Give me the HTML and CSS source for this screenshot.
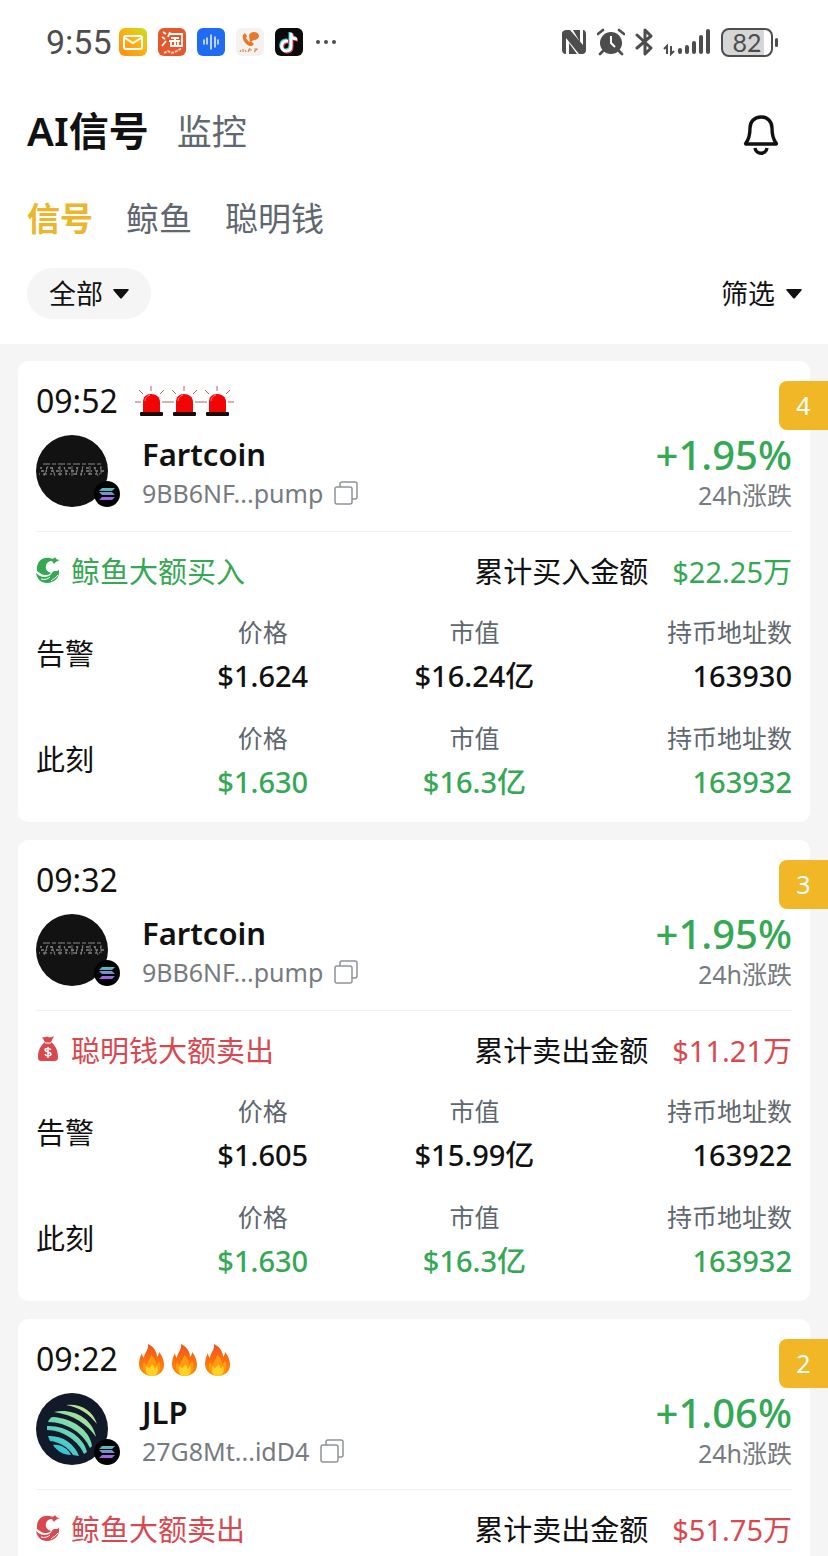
FILE: index.html
```html
<!DOCTYPE html>
<html lang="zh-CN">
<head>
    <meta charset="UTF-8">
    <meta name="viewport" content="width=device-width, initial-scale=1.0">
    <title>AI信号</title>
    <link rel="stylesheet" href="styles.css">
</head>
<body>
    <!-- shared icons -->
    <svg class="sprite" aria-hidden="true">
        <defs>
            <linearGradient id="sol" x1="0" y1="0" x2="0" y2="1">
                <stop offset="0" stop-color="#4fc3b4"/>
                <stop offset="0.5" stop-color="#7b8ad0"/>
                <stop offset="1" stop-color="#a75be0"/>
            </linearGradient>
            <linearGradient id="jup" gradientUnits="userSpaceOnUse" x1="56" y1="12" x2="22" y2="60">
                <stop offset="0" stop-color="#d3e78a"/>
                <stop offset="0.5" stop-color="#7fdcaa"/>
                <stop offset="1" stop-color="#2cc0dc"/>
            </linearGradient>
            <linearGradient id="flame" x1="0" y1="0" x2="0" y2="1">
                <stop offset="0" stop-color="#f4511e"/>
                <stop offset="1" stop-color="#ff8f00"/>
            </linearGradient>
            <linearGradient id="mail" x1="1" y1="0" x2="0" y2="1">
                <stop offset="0" stop-color="#b5e61d"/>
                <stop offset="0.4" stop-color="#fcb712"/>
                <stop offset="1" stop-color="#fb8c14"/>
            </linearGradient>
        </defs>
        <symbol id="siren" viewBox="0 0 33 32">
            <path d="M0 16h6M27 16h6M4 4l4 4M29 4l-4 4M16 0v5" stroke="#b0655f" stroke-width="1" fill="none"/>
            <path d="M8 27V16c0-5 3-8 8-8s9 3 9 8v11z" fill="#f20505"/>
            <path d="M10 15c0-3 2-5 5-6" stroke="#ff7a6b" stroke-width="1" fill="none"/>
            <rect x="5" y="26" width="23" height="4" rx="1" fill="#1c0808"/>
        </symbol>
        <symbol id="fire" viewBox="0 0 33 34">
            <path d="M13 1c6 3 9 8 9 13 1-1 2-3 2-5 4 5 5 9 5 13 0 7-6 11-12 11S4 29 4 21c0-4 1-7 3-11 0 2 1 4 2 5 0-5 5-8 4-14z" fill="url(#flame)"/>
            <path d="M16 12c5 4 5 7 5 10l3-4c3 6 2 14-7 14-8 0-11-7-8-13 1 2 2 3 3 3 0-4 4-6 4-10z" fill="#ff9a12"/>
            <path d="M17 21c2 2 2 3 3 5l2-3c2 5 0 10-5 10s-8-5-5-10c1 1 1 2 2 2 1-1 3-2 3-4z" fill="#ffd322"/>
        </symbol>
        <symbol id="whale" viewBox="0 0 24 26">
            <path d="M14 1C5-1 0 6 1 14c3 2 5 4 8 4 2 0 4 0 6-2-4-1-6-4-5-7 0-3 3-5 6-5l2 3c1-2 3-3 6-4-3 0-4-1-5-3-1 2-3 2-5 1z"/>
            <path d="M0 16c4 4 8 5 13 3 2-1 3-4 5-5 2 0 4 0 5-1 1 8-5 13-12 13C5 26 1 22 0 16z"/>
            <path d="M5 22c4 1 7 0 9-2M15 24c2-2 5-3 7-6" stroke="#fff" stroke-width="1" fill="none"/>
        </symbol>
        <symbol id="bag" viewBox="0 0 24 26">
            <path d="M6 1c3 1 4-1 6 0s4 0 6-1l-3 6c5 4 7 9 7 15 0 3-1 4-4 4H6c-3 0-4-1-4-4C2 15 4 10 9 6z"/>
            <path d="M9 7h6" stroke="#fff" stroke-width="1"/>
            <path d="M15 14c-1-2-6-2-6 0s6 2 6 4-5 3-6 0M12 11v11" stroke="#fff" stroke-width="1.5" fill="none"/>
        </symbol>
        <symbol id="copy" viewBox="0 0 24 24">
            <g fill="none" stroke="#8f9499" stroke-width="1.5">
                <rect x="1" y="6" width="17" height="17" rx="2"/>
                <path d="M6 6V3c0-1 1-2 2-2h13c1 0 2 1 2 2v13c0 1-1 2-2 2h-3"/>
            </g>
        </symbol>
        <symbol id="solana" viewBox="0 0 26 26">
            <circle cx="13" cy="13" r="13" fill="#030304"/>
            <path d="M8 7h13l-3 3H5zM5 11h13l3 3H8zM8 16h13l-3 3H5z" fill="url(#sol)"/>
        </symbol>
        <symbol id="fartcoin" viewBox="0 0 72 72">
            <circle cx="36" cy="36" r="36" fill="#121212"/>
            <g fill="none" stroke="#8a8a8a">
                <path d="M7 29h60" stroke-width="1" stroke-dasharray="7 2 4 2"/>
                <path d="M4 33h64" stroke-width="2" stroke-dasharray="2 4 1 3 3 5" opacity="0.7"/>
                <path d="M5 36h64" stroke-width="2" stroke-dasharray="3 2 1 4 2 3" opacity="0.7"/>
                <path d="M3 39h64" stroke-width="2" stroke-dasharray="1 3 4 3 2 2" opacity="0.6"/>
                <path d="M12 31l-4 10M16 32l3 9M24 31v10M28 32l3 8M36 31v10M42 32l-2 8M47 31l-2 10M54 31v9M58 32l4 9M65 31v8" stroke-width="1" opacity="0.8"/>
            </g>
        </symbol>
        <symbol id="jupiter" viewBox="0 0 72 72">
            <circle cx="36" cy="36" r="36" fill="#121a2a"/>
            <g fill="url(#jup)">
                <path d="M30 12c13-2 27 5 31 19-8-10-18-17-31-19z"/>
                <path d="M18 19c17-4 38 5 42 25-9-13-22-22-42-25z"/>
                <path d="M12 29c1-3 3-5 5-5 19 1 37 13 39 29l-2 2c-6-14-23-26-42-26z"/>
                <path d="M11 37v-4c18-1 37 11 40 26l-3 2c-5-12-20-24-37-24z"/>
                <path d="M14 48l-2-5c14-1 27 8 31 20l-6-1c-4-7-13-13-23-14z"/>
                <path d="M17 52c8-1 15 4 18 10-8 0-14-4-18-10z"/>
            </g>
        </symbol>
        <symbol id="arrow" viewBox="0 0 16 10">
            <path d="M1 0h14c1 0 1 1 0 2L9 9c-1 1-1 1-2 0L1 2C0 1 0 0 1 0z" fill="#111"/>
        </symbol>
    </svg>

    <div class="app">
        <div class="status-bar">
            <div class="status-left">
                <span class="clock">9:55</span>
                <svg class="app-icon" viewBox="0 0 28 28">
                    <rect width="28" height="28" rx="6" fill="url(#mail)"/>
                    <rect x="5" y="8" width="18" height="13" rx="2" fill="none" stroke="#fff" stroke-width="2"/>
                    <path d="M6 10l8 5 8-5" fill="none" stroke="#fff" stroke-width="2"/>
                </svg>
                <svg class="app-icon" viewBox="0 0 28 28">
                    <rect width="28" height="28" rx="6" fill="#e5582c"/>
                    <path d="M5 4l3 2M4 9l3 2M4 18l4-5M12 4l-2 5M11 6h13v12h-3M13 10h8M11 13h11M17 10v7M13 14v4h7v-4" fill="none" stroke="#fff" stroke-width="1.8"/>
                    <path d="M6 25l4-2 4 2 5-2 5-3" fill="none" stroke="#f8c9bd" stroke-width="2" stroke-dasharray="3 1"/>
                </svg>
                <svg class="app-icon" viewBox="0 0 28 28">
                    <rect width="28" height="28" rx="6" fill="#1f6bf2"/>
                    <path d="M7 12v4M10 10v6M14 7v14M18 9v10M21 12v4" stroke="#fff" stroke-width="1.4" stroke-linecap="round"/>
                </svg>
                <svg class="app-icon" viewBox="0 0 28 28">
                    <rect width="28" height="28" rx="6" fill="#f4f2f0"/>
                    <path d="M8 6c-4 3 2 13 8 12l2-2-3-3-2 1-3-4 1-2-2-3z" fill="#e8762c"/>
                    <path d="M13 8a5 4 0 1 1 5 4l-4 2z" fill="#e8762c"/>
                    <path d="M7 21v3M5 22l-1 2M9 22l1 2M12 22h4M14 20l-2 4M18 21h4M18 24l3-3" fill="none" stroke="#d98b52" stroke-width="1.2"/>
                </svg>
                <svg class="app-icon" viewBox="0 0 28 28">
                    <rect width="28" height="28" rx="6" fill="#0b0b0c"/>
                    <g fill="none" stroke-width="3">
                        <path d="M12 12c-8-1-8 10-2 10 4 0 5-2 5-5V4c0 4 3 6 6 6" stroke="#35d6d2"/>
                        <path d="M14 14c-8-1-8 10-2 10 4 0 5-2 5-5V6c1 4 3 6 6 6" stroke="#ee3457"/>
                        <path d="M13 13c-8-1-8 10-2 10 4 0 5-2 5-5V5c0 4 2 6 6 6" stroke="#fff"/>
                    </g>
                </svg>
                <svg class="more" viewBox="0 0 20 4"><g fill="#4d4d4d"><circle cx="2" cy="2" r="2"/><circle cx="10" cy="2" r="2"/><circle cx="18" cy="2" r="2"/></g></svg>
            </div>
            <div class="status-right">
                <svg class="nfc" viewBox="0 0 26 26">
                    <path d="M6 1h3l13 15V1c2 0 3 2 3 4v16c0 2-1 4-4 4h-3L5 9v16c-3 0-4-2-4-4V5c0-3 2-4 5-4z" fill="#4d4d4d"/>
                    <path d="M8 14l8 11H8zM12 1h7v12z" fill="#4d4d4d"/>
                </svg>
                <svg class="alarm" viewBox="0 0 28 28">
                    <circle cx="14" cy="15" r="11" fill="#4d4d4d"/>
                    <path d="M1 6l5-4M27 6l-5-4M6 23l-3 3M22 23l3 3" stroke="#4d4d4d" stroke-width="2.6" stroke-linecap="round"/>
                    <path d="M14 8v7l4 4" fill="none" stroke="#fff" stroke-width="2"/>
                </svg>
                <svg class="bluetooth" viewBox="0 0 18 28">
                    <path d="M2 7l14 13-6 6V2l6 6L2 20" fill="none" stroke="#4d4d4d" stroke-width="3" stroke-linejoin="round" stroke-linecap="round"/>
                </svg>
                <svg class="signal" viewBox="0 0 48 28">
                    <path d="M4 26v-8l-3 3M8 18v8l3-3" fill="none" stroke="#4d4d4d" stroke-width="2"/>
                    <path d="M17 24v-2M24 24v-5M31 24v-9M38 24V9M45 24V3" stroke="#4d4d4d" stroke-width="4" stroke-linecap="round"/>
                </svg>
                <div class="battery">82</div>
            </div>
        </div>

        <header class="header">
            <h1>AI信号</h1>
            <a class="monitor" href="#">监控</a>
            <button class="bell" aria-label="通知">
                <svg viewBox="0 0 36 42">
                    <path d="M18 2c7 0 11 5 11 11 0 7 1 11 4 15 1 1 0 1-1 1H4c-1 0-2 0-1-1 3-4 4-8 4-15C7 7 11 2 18 2z" fill="none" stroke="#111" stroke-width="3.4" stroke-linejoin="round"/>
                    <path d="M12 33c1 7 11 7 12 0" fill="none" stroke="#111" stroke-width="3.4"/>
                </svg>
            </button>
        </header>

        <nav class="tabs">
            <a class="active" href="#">信号</a>
            <a href="#">鲸鱼</a>
            <a href="#">聪明钱</a>
        </nav>

        <div class="filters">
            <div class="dropdown chip">
                <select aria-label="类型"><option>全部</option></select>
                <svg><use href="#arrow"/></svg>
            </div>
            <div class="dropdown">
                <select aria-label="筛选"><option>筛选</option></select>
                <svg><use href="#arrow"/></svg>
            </div>
        </div>

        <main class="list">
            <article class="card">
                <span class="count">4</span>
                <div class="time">
                    <time>09:52</time>
                    <span class="level">
                        <svg><use href="#siren"/></svg><svg><use href="#siren"/></svg><svg><use href="#siren"/></svg>
                    </span>
                </div>
                <div class="token">
                    <div class="avatar">
                        <svg class="logo"><use href="#fartcoin"/></svg>
                        <svg class="chain"><use href="#solana"/></svg>
                    </div>
                    <div class="info">
                        <h2>Fartcoin</h2>
                        <p>9BB6NF...pump <button class="copy" aria-label="复制"><svg><use href="#copy"/></svg></button></p>
                    </div>
                    <div class="change">
                        <strong>+1.95%</strong>
                        <p>24h涨跌</p>
                    </div>
                </div>
                <div class="signal-row buy">
                    <svg><use href="#whale"/></svg>
                    <span class="type">鲸鱼大额买入</span>
                    <span class="label">累计买入金额</span>
                    <span class="amount">$22.25万</span>
                </div>
                <table>
                    <tr>
                        <th scope="row">告警</th>
                        <td><span>价格</span><b>$1.624</b></td>
                        <td><span>市值</span><b>$16.24亿</b></td>
                        <td><span>持币地址数</span><b>163930</b></td>
                    </tr>
                    <tr class="now">
                        <th scope="row">此刻</th>
                        <td><span>价格</span><b>$1.630</b></td>
                        <td><span>市值</span><b>$16.3亿</b></td>
                        <td><span>持币地址数</span><b>163932</b></td>
                    </tr>
                </table>
            </article>

            <article class="card">
                <span class="count">3</span>
                <div class="time">
                    <time>09:32</time>
                </div>
                <div class="token">
                    <div class="avatar">
                        <svg class="logo"><use href="#fartcoin"/></svg>
                        <svg class="chain"><use href="#solana"/></svg>
                    </div>
                    <div class="info">
                        <h2>Fartcoin</h2>
                        <p>9BB6NF...pump <button class="copy" aria-label="复制"><svg><use href="#copy"/></svg></button></p>
                    </div>
                    <div class="change">
                        <strong>+1.95%</strong>
                        <p>24h涨跌</p>
                    </div>
                </div>
                <div class="signal-row sell">
                    <svg><use href="#bag"/></svg>
                    <span class="type">聪明钱大额卖出</span>
                    <span class="label">累计卖出金额</span>
                    <span class="amount">$11.21万</span>
                </div>
                <table>
                    <tr>
                        <th scope="row">告警</th>
                        <td><span>价格</span><b>$1.605</b></td>
                        <td><span>市值</span><b>$15.99亿</b></td>
                        <td><span>持币地址数</span><b>163922</b></td>
                    </tr>
                    <tr class="now">
                        <th scope="row">此刻</th>
                        <td><span>价格</span><b>$1.630</b></td>
                        <td><span>市值</span><b>$16.3亿</b></td>
                        <td><span>持币地址数</span><b>163932</b></td>
                    </tr>
                </table>
            </article>

            <article class="card">
                <span class="count">2</span>
                <div class="time">
                    <time>09:22</time>
                    <span class="level">
                        <svg><use href="#fire"/></svg><svg><use href="#fire"/></svg><svg><use href="#fire"/></svg>
                    </span>
                </div>
                <div class="token">
                    <div class="avatar">
                        <svg class="logo"><use href="#jupiter"/></svg>
                        <svg class="chain"><use href="#solana"/></svg>
                    </div>
                    <div class="info">
                        <h2>JLP</h2>
                        <p>27G8Mt...idD4 <button class="copy" aria-label="复制"><svg><use href="#copy"/></svg></button></p>
                    </div>
                    <div class="change">
                        <strong>+1.06%</strong>
                        <p>24h涨跌</p>
                    </div>
                </div>
                <div class="signal-row sell">
                    <svg><use href="#whale"/></svg>
                    <span class="type">鲸鱼大额卖出</span>
                    <span class="label">累计卖出金额</span>
                    <span class="amount">$51.75万</span>
                </div>
            </article>
        </main>
    </div>
</body>
</html>
```
FILE: styles.css
```css
*{
    margin: 0;
    padding: 0;
    box-sizing: border-box;
}
body{
    background: #fff;
    color: #111;
    font-family: 'Noto Sans','Noto Sans CJK SC',sans-serif;
}
a{
    color: inherit;
    text-decoration: none;
}
button,select{
    border: 0;
    background: none;
    font: inherit;
    color: inherit;
    cursor: pointer;
}
svg{
    display: block;
    flex-shrink: 0;
}
.sprite{
    position: absolute;
    width: 0;
    height: 0;
}
.app{
    height: 100vh;
    overflow: hidden;
    display: flex;
    flex-direction: column;
}
.app > *{
    flex-shrink: 0;
}

/* status bar */
.status-bar{
    height: 84px;
    padding: 0 55px 0 46px;
    display: flex;
    align-items: center;
    justify-content: space-between;
    font-family: Roboto,sans-serif;
    color: #4d4d4d;
}
.status-left,.status-right{
    display: flex;
    align-items: center;
}
.status-left{
    gap: 11px;
}
.clock{
    font-size: 34px;
    margin-right: -4px;
}
.app-icon{
    width: 28px;
    height: 28px;
}
.more{
    width: 20px;
    height: 4px;
    margin-left: 2px;
}
.status-right{
    gap: 10px;
}
.nfc{
    width: 26px;
    height: 26px;
}
.alarm{
    width: 28px;
    height: 28px;
}
.bluetooth{
    width: 18px;
    height: 28px;
}
.signal{
    width: 48px;
    height: 28px;
}
.battery{
    position: relative;
    width: 52px;
    height: 29px;
    border: 2px solid #4d4d4d;
    border-radius: 8px;
    background: linear-gradient(90deg,#d6d6d6 86%,#fff 86%);
    font-family: Lato,sans-serif;
    font-size: 25px;
    line-height: 25px;
    text-align: center;
}
.battery::after{
    content: "";
    position: absolute;
    right: -7px;
    top: 8px;
    width: 3px;
    height: 9px;
    border-radius: 2px;
    background: #4d4d4d;
}

/* header */
.header{
    height: 94px;
    padding: 0 49px 4px 27px;
    display: flex;
    align-items: center;
}
.header h1{
    font-size: 40px;
    font-weight: 600;
}
.monitor{
    margin-left: 28px;
    font-size: 35px;
    color: #5f676f;
}
.bell{
    margin-left: auto;
    padding-top: 14px;
}
.bell svg{
    width: 36px;
    height: 42px;
}
.tabs{
    height: 80px;
    padding: 0 27px 2px;
    display: flex;
    align-items: center;
    gap: 33px;
    font-size: 33px;
    color: #5f676f;
}
.tabs .active{
    color: #ebb52c;
    font-weight: 600;
}
.filters{
    padding: 10px 26px 25px 27px;
    display: flex;
    justify-content: space-between;
}
.dropdown{
    position: relative;
    display: flex;
    align-items: center;
}
.dropdown select{
    appearance: none;
    height: 51px;
    padding-right: 27px;
    font-size: 27px;
}
.dropdown svg{
    position: absolute;
    right: 0;
    width: 16px;
    height: 10px;
    pointer-events: none;
}
.chip{
    border-radius: 26px;
    background: #f5f5f5;
}
.chip select{
    padding: 0 48px 0 22px;
}
.chip svg{
    right: 22px;
}

/* signal cards */
.list{
    flex: 1 0 auto;
    padding: 17px 18px 0;
    background: #f5f5f5;
}
.card{
    position: relative;
    margin-bottom: 18px;
    padding: 18px 18px 0;
    border-radius: 10px;
    background: #fff;
}
.count{
    position: absolute;
    top: 20px;
    right: -18px;
    width: 49px;
    height: 49px;
    border-radius: 8px 0 0 8px;
    background: #f2b727;
    color: #fff;
    font-size: 25px;
    line-height: 49px;
    text-align: center;
}
.time{
    height: 44px;
    display: flex;
    align-items: center;
    gap: 17px;
    font-size: 32px;
    line-height: 42px;
}
.level{
    display: flex;
    padding-top: 2px;
}
.level svg{
    width: 33px;
    height: 34px;
}
.token{
    height: 97px;
    margin-top: 12px;
    border-bottom: 1px solid #f2f2f2;
    display: flex;
}
.avatar{
    position: relative;
    width: 72px;
    height: 72px;
}
.logo{
    width: 72px;
    height: 72px;
}
.chain{
    position: absolute;
    right: -12px;
    bottom: 0;
    width: 26px;
    height: 26px;
}
.info{
    margin-left: 34px;
}
.info h2{
    font-size: 31px;
    font-weight: 600;
    line-height: 38px;
}
.info p{
    display: flex;
    align-items: center;
    gap: 11px;
    font-size: 25px;
    line-height: 40px;
    color: #767b80;
}
.copy svg{
    width: 24px;
    height: 24px;
}
.change{
    margin-left: auto;
    text-align: right;
}
.change strong{
    display: block;
    font-size: 40px;
    font-weight: 500;
    line-height: 40px;
    color: #34a853;
}
.change p{
    font-size: 25px;
    line-height: 40px;
    color: #767b80;
}
.signal-row{
    height: 78px;
    padding-bottom: 2px;
    display: flex;
    align-items: center;
    font-size: 29px;
}
.signal-row svg{
    width: 24px;
    height: 26px;
    margin-right: 11px;
    fill: currentColor;
}
.signal-row .label{
    margin-left: auto;
    margin-right: 24px;
    color: #111;
}
.buy{
    color: #34a853;
}
.sell{
    color: #d9484f;
}
table{
    width: 100%;
    table-layout: fixed;
    border-collapse: collapse;
}
th{
    width: 16%;
    font-size: 29px;
    font-weight: 400;
    line-height: 88px;
    text-align: left;
    vertical-align: top;
}
td{
    padding-bottom: 18px;
    text-align: center;
    vertical-align: top;
}
td:last-child{
    text-align: right;
}
td span,td b{
    display: block;
    line-height: 44px;
}
td span{
    font-size: 25px;
    color: #5f676f;
}
td b{
    font-size: 29px;
    font-weight: 500;
}
.now b{
    color: #34a853;
}
```
